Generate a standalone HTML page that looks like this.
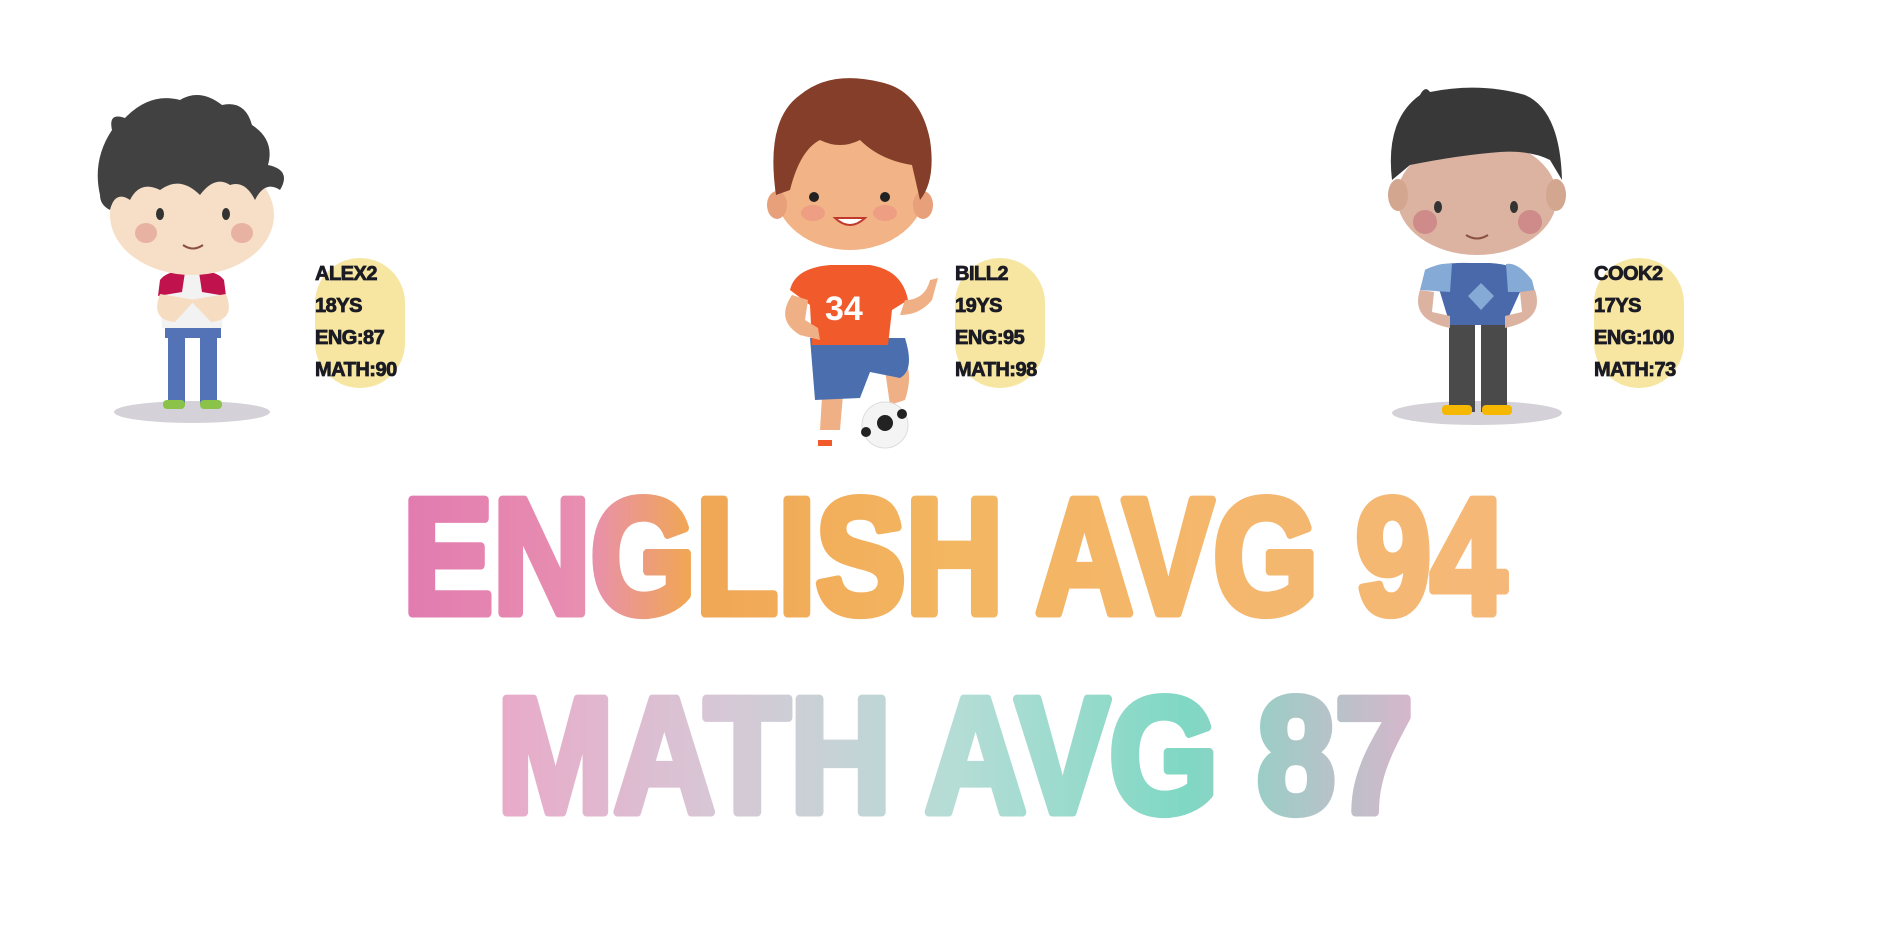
<!DOCTYPE html>
<html><head><meta charset="utf-8"><style>
html,body{margin:0;padding:0;background:#fff;width:1901px;height:933px;overflow:hidden;position:relative;font-family:"Liberation Sans",sans-serif}
.box{position:absolute;width:90px;height:130px;top:258px;background:#f7e6a2;border-radius:45px}
.txt{position:absolute;top:258px;font-weight:bold;font-size:20px;line-height:32px;color:#1b1b24;letter-spacing:-0.5px;-webkit-text-stroke:0.8px #1b1b24}
svg{position:absolute;left:0;top:0}
</style></head><body>
<div class="box" style="left:315px"></div>
<div class="box" style="left:955px"></div>
<div class="box" style="left:1594px"></div>
<div class="txt" style="left:315px">ALEX2<br>18YS<br>ENG:87<br>MATH:90</div>
<div class="txt" style="left:955px">BILL2<br>19YS<br>ENG:95<br>MATH:98</div>
<div class="txt" style="left:1594px">COOK2<br>17YS<br>ENG:100<br>MATH:73</div>
<svg width="1901" height="933" viewBox="0 0 1901 933">
<defs>
<linearGradient id="ge" x1="400" y1="0" x2="1509" y2="0" gradientUnits="userSpaceOnUse">
<stop offset="0" stop-color="#e27bb0"/><stop offset="0.17" stop-color="#e88fb0"/><stop offset="0.26" stop-color="#f0a655"/><stop offset="0.5" stop-color="#f3b661"/><stop offset="1" stop-color="#f5b878"/></linearGradient>
<linearGradient id="gm" x1="494" y1="0" x2="1416" y2="0" gradientUnits="userSpaceOnUse">
<stop offset="0" stop-color="#e9a9c8"/><stop offset="0.25" stop-color="#d6c8d6"/><stop offset="0.5" stop-color="#b5ddd6"/><stop offset="0.75" stop-color="#7fd8c4"/><stop offset="1" stop-color="#d7b6cb"/></linearGradient>
</defs>
<!-- kid1 -->
<ellipse cx="192" cy="412" rx="78" ry="11" fill="#d4d2d8"/>
<rect x="168" y="320" width="17" height="85" fill="#5473b6"/><rect x="200" y="320" width="17" height="85" fill="#5473b6"/>
<rect x="165" y="318" width="56" height="20" fill="#5473b6"/>
<rect x="163" y="400" width="22" height="9" rx="4" fill="#8bc34a"/><rect x="200" y="400" width="22" height="9" rx="4" fill="#8bc34a"/>
<path d="M160 280 Q192 266 224 280 L222 328 L162 328 Z" fill="#f2f2f2"/>
<path d="M160 280 Q168 270 185 272 L182 292 L158 296 Z" fill="#c0124c"/><path d="M224 280 Q216 270 199 272 L202 292 L226 296 Z" fill="#c0124c"/>
<path d="M160 294 Q150 320 175 322 L195 300 Z" fill="#f6dcc0"/><path d="M226 294 Q236 320 211 322 L190 300 Z" fill="#f6dcc0"/>
<ellipse cx="192" cy="215" rx="82" ry="60" fill="#f6dfc6"/>
<ellipse cx="146" cy="233" rx="11" ry="10" fill="#e8b2a2"/><ellipse cx="242" cy="233" rx="11" ry="10" fill="#e8b2a2"/>
<ellipse cx="160" cy="214" rx="4" ry="6" fill="#333"/><ellipse cx="226" cy="214" rx="4" ry="6" fill="#333"/>
<path d="M183 245 Q193 252 203 245" stroke="#8a5040" stroke-width="2" fill="none"/>
<path d="M100 195 Q92 160 112 130 Q108 112 125 118 Q150 92 180 100 Q200 88 222 105 Q245 100 252 125 Q275 140 268 165 Q292 170 280 190 Q265 180 255 200 Q245 180 230 185 Q215 175 200 195 Q180 175 160 190 Q140 180 130 200 Q115 190 110 210 Q100 205 100 195 Z" fill="#414141"/>
<!-- kid2 -->
<path d="M826 330 L820 430 L840 430 L848 335 Z" fill="#f0b086"/>
<path d="M880 340 Q920 355 905 400 L890 405 L885 370 Z" fill="#f0b086"/>
<path d="M810 338 L905 338 Q915 370 900 378 L870 372 L860 398 L815 400 Z" fill="#4b6fae"/>
<circle cx="885" cy="425" r="23" fill="#f4f4f4" stroke="#ddd"/><circle cx="885" cy="423" r="8" fill="#222"/><circle cx="866" cy="432" r="5" fill="#222"/><circle cx="902" cy="414" r="5" fill="#222"/>
<path d="M818 440 L832 440 L832 446 L818 446 Z" fill="#f15a2b"/>
<path d="M790 290 Q795 268 830 265 L870 265 Q902 270 908 300 L892 310 L888 345 L812 345 L810 305 Z" fill="#f15a2b"/>
<text x="825" y="320" font-family="Liberation Sans" font-weight="bold" font-size="34" fill="#fff">34</text>
<path d="M792 295 Q775 320 800 335 L820 340 L818 328 L805 320 L808 300 Z" fill="#f0b086"/>
<path d="M905 300 Q925 300 930 280 L938 278 L932 300 Q920 315 900 315 Z" fill="#f0b086"/>
<ellipse cx="850" cy="190" rx="75" ry="60" fill="#f2b387"/>
<ellipse cx="777" cy="205" rx="10" ry="14" fill="#e8a07a"/><ellipse cx="923" cy="205" rx="10" ry="14" fill="#e8a07a"/>
<ellipse cx="813" cy="213" rx="12" ry="8" fill="#ec9a82" opacity=".8"/><ellipse cx="885" cy="213" rx="12" ry="8" fill="#ec9a82" opacity=".8"/>
<circle cx="814" cy="197" r="5" fill="#222"/><circle cx="885" cy="197" r="5" fill="#222"/>
<path d="M835 218 Q850 232 865 218 Z" fill="#fff" stroke="#c0392b" stroke-width="2"/>
<path d="M776 195 Q765 120 800 95 Q830 70 880 82 Q920 90 930 140 Q936 180 920 200 L912 165 Q880 160 860 140 Q840 150 820 140 Q800 150 790 190 Z" fill="#843e29"/>
<!-- kid3 -->
<ellipse cx="1477" cy="413" rx="85" ry="12" fill="#d4d2d8"/>
<rect x="1449" y="322" width="26" height="90" fill="#4a4a4a"/><rect x="1481" y="322" width="26" height="90" fill="#4a4a4a"/>
<rect x="1442" y="405" width="30" height="10" rx="4" fill="#f5b700"/><rect x="1482" y="405" width="30" height="10" rx="4" fill="#f5b700"/>
<path d="M1425 270 Q1440 262 1470 263 L1490 263 Q1525 265 1532 285 L1520 292 L1505 325 L1450 325 L1440 292 Z" fill="#4a69ab"/>
<path d="M1425 270 Q1440 262 1452 264 L1450 292 L1420 290 Z" fill="#86aad6"/><path d="M1532 280 Q1518 262 1506 264 L1508 292 L1535 292 Z" fill="#86aad6"/>
<path d="M1468 296 L1481 283 L1494 296 L1481 310 Z" fill="#86aad6"/>
<path d="M1420 290 Q1410 320 1450 328 L1450 316 L1432 312 L1434 292 Z" fill="#dbb3a0"/><path d="M1535 290 Q1545 320 1505 328 L1505 316 L1522 312 L1520 292 Z" fill="#dbb3a0"/>
<ellipse cx="1477" cy="197" rx="80" ry="58" fill="#dbb3a0"/>
<ellipse cx="1398" cy="195" rx="10" ry="16" fill="#d3a690"/><ellipse cx="1556" cy="195" rx="10" ry="16" fill="#d3a690"/>
<circle cx="1425" cy="222" r="12" fill="#cf8a8a"/><circle cx="1530" cy="222" r="12" fill="#cf8a8a"/>
<ellipse cx="1438" cy="207" rx="4" ry="6" fill="#333"/><ellipse cx="1514" cy="207" rx="4" ry="6" fill="#333"/>
<path d="M1466 235 Q1477 242 1488 235" stroke="#8a5040" stroke-width="2" fill="none"/>
<path d="M1392 180 Q1385 120 1420 95 Q1425 85 1430 92 Q1480 82 1525 95 Q1560 110 1562 180 L1550 160 Q1530 150 1500 152 Q1460 155 1410 165 Z" fill="#383838"/>
<!-- averages -->
<text x="403" y="613" font-family="Liberation Sans" font-weight="bold" font-size="164" textLength="1103" lengthAdjust="spacingAndGlyphs" fill="url(#ge)" stroke="url(#ge)" stroke-width="9" stroke-linejoin="round">ENGLISH AVG 94</text>
<text x="497" y="812" font-family="Liberation Sans" font-weight="bold" font-size="164" textLength="916" lengthAdjust="spacingAndGlyphs" fill="url(#gm)" stroke="url(#gm)" stroke-width="9" stroke-linejoin="round">MATH AVG 87</text>
</svg>
</body></html>
